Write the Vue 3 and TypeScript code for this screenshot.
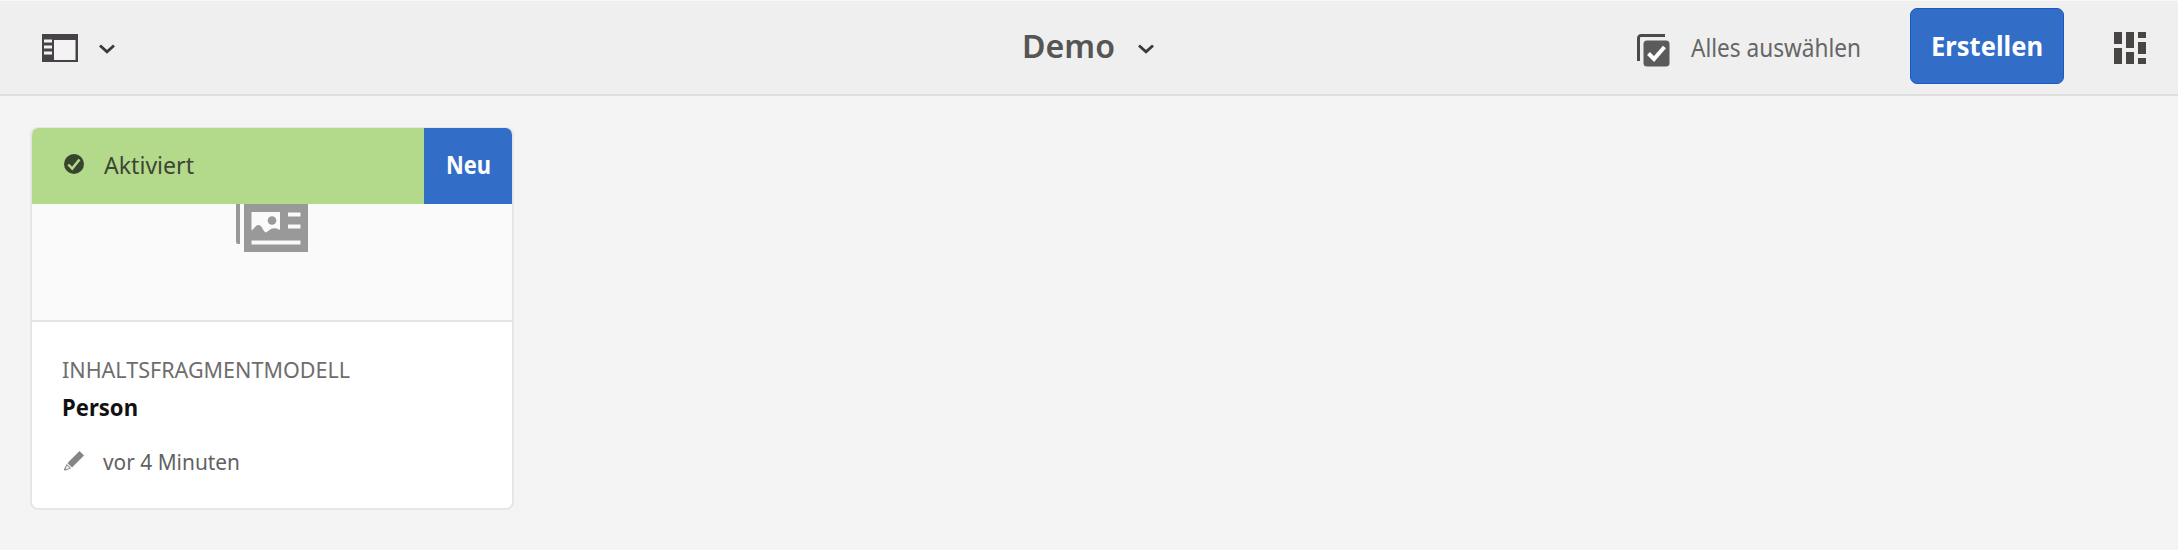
<script setup lang="ts">
interface Label {
  text: string
  width: number
  height: number
  baseline: number
}

const labels: Record<string, Label> = {
  title: { text: 'Demo', width: 93, height: 40, baseline: 33 },
  selectAll: { text: 'Alles auswählen', width: 170, height: 32, baseline: 24.7 },
  create: { text: 'Erstellen', width: 112, height: 32, baseline: 25.5 },
  status: { text: 'Aktiviert', width: 90, height: 32, baseline: 24 },
  badge: { text: 'Neu', width: 45, height: 32, baseline: 24 },
  type: { text: 'INHALTSFRAGMENTMODELL', width: 288, height: 32, baseline: 24 },
  name: { text: 'Person', width: 76, height: 32, baseline: 24 },
  modified: { text: 'vor 4 Minuten', width: 137, height: 32, baseline: 25 },
}

const columns = [
  [[0, 12], [16, 16]],
  [[0, 16], [20, 12]],
  [[0, 6], [10, 12], [26, 6]],
]
</script>

<template>
  <div class="page">
    <header class="bar">
      <div class="rail">
        <svg width="36" height="28" viewBox="0 0 36 28">
          <rect width="36" height="28" fill="#464248" />
          <path fill="#f3f3f3" d="M12 6h21.500v20H12zM2 5.600h8v2.800H2zM2 11.600h8v2.800H2zM2 17.600h8v2.800H2z" />
        </svg>
        <svg class="chevron" width="18" height="12" viewBox="0 0 18 12">
          <path d="M2 2.500l7 6.300 7-6.300" />
        </svg>
      </div>
      <div class="heading">
        <svg class="label title" :width="labels.title.width" :height="labels.title.height">
          <text x="0" :y="labels.title.baseline" :textLength="labels.title.width" lengthAdjust="spacingAndGlyphs">{{ labels.title.text }}</text>
        </svg>
        <svg class="chevron" width="18" height="12" viewBox="0 0 18 12">
          <path d="M2 2.500l7 6.300 7-6.300" />
        </svg>
      </div>
      <div class="actions">
        <svg class="select-icon" width="33" height="33" viewBox="0 0 33 33">
          <path d="M1.500 27V4a2.500 2.500 0 0 1 2.500-2.500H28" fill="none" stroke="#4b4b4b" stroke-width="3" />
          <rect x="6.500" y="6.500" width="26" height="26" rx="3.500" fill="#5b5b5b" />
          <path d="M11.500 19.500l5.500 5.500 10.500-12" fill="none" stroke="#fff" stroke-width="4" />
        </svg>
        <svg class="label select" :width="labels.selectAll.width" :height="labels.selectAll.height">
          <text x="0" :y="labels.selectAll.baseline" :textLength="labels.selectAll.width" lengthAdjust="spacingAndGlyphs">{{ labels.selectAll.text }}</text>
        </svg>
        <button class="create">
          <svg class="label" :width="labels.create.width" :height="labels.create.height">
            <text x="0" :y="labels.create.baseline" :textLength="labels.create.width" lengthAdjust="spacingAndGlyphs">{{ labels.create.text }}</text>
          </svg>
        </button>
        <svg width="32" height="32" viewBox="0 0 32 32" fill="#494545">
          <template v-for="(column, i) in columns" :key="i">
            <rect v-for="cell in column" :key="cell[0]" :x="i * 12" :y="cell[0]" width="8" :height="cell[1]" />
          </template>
        </svg>
      </div>
    </header>

    <main class="content">
      <article class="card">
        <div class="banner">
          <div class="status">
            <svg width="20" height="20" viewBox="0 0 20 20">
              <circle cx="10" cy="10" r="10" fill="#37452e" />
              <path d="M4.300 10.500l3.900 4L15.500 5.500" fill="none" stroke="#b3da8a" stroke-width="2.500" />
            </svg>
            <svg class="label" :width="labels.status.width" :height="labels.status.height">
              <text x="0" :y="labels.status.baseline" :textLength="labels.status.width" lengthAdjust="spacingAndGlyphs">{{ labels.status.text }}</text>
            </svg>
          </div>
          <div class="badge">
            <svg class="label" :width="labels.badge.width" :height="labels.badge.height">
              <text x="0" :y="labels.badge.baseline" :textLength="labels.badge.width" lengthAdjust="spacingAndGlyphs">{{ labels.badge.text }}</text>
            </svg>
          </div>
        </div>
        <div class="preview">
          <svg width="72" height="48" viewBox="0 0 72 48">
            <path fill="#999" d="M0 0h4v40H2a2 2 0 0 1-2-2zM8 0h64v48H8z" />
            <path fill="#fafafa" d="M15.500 8H44v18c-3-2-7-2.500-9-1l-5 3.500c-3-1-4-7.500-7.500-7.500-3 0-4 4-7 5.500zM52 8.500h12.500v4H52zM52 20.500h12.500v4H52zM15.500 36.500h49v4h-49z" />
            <circle cx="36" cy="16.500" r="4.300" fill="#999" />
          </svg>
        </div>
        <div class="details">
          <svg class="label type" :width="labels.type.width" :height="labels.type.height">
            <text x="0" :y="labels.type.baseline" :textLength="labels.type.width" lengthAdjust="spacingAndGlyphs">{{ labels.type.text }}</text>
          </svg>
          <svg class="label name" :width="labels.name.width" :height="labels.name.height">
            <text x="0" :y="labels.name.baseline" :textLength="labels.name.width" lengthAdjust="spacingAndGlyphs">{{ labels.name.text }}</text>
          </svg>
          <div class="modified">
            <svg width="20" height="20" viewBox="0 0 20 20">
              <path fill="#858585" d="M15.500 0L20 4.500 8 16.500 3.500 12z" />
              <path fill="#999" d="M2.700 12.800l4.500 4.500L2 19.500H0V18z" />
              <path fill="#fff" d="M3 14.800l2.200 2.200-2.500 1-.7-.7z" />
            </svg>
            <svg class="label" :width="labels.modified.width" :height="labels.modified.height">
              <text x="0" :y="labels.modified.baseline" :textLength="labels.modified.width" lengthAdjust="spacingAndGlyphs">{{ labels.modified.text }}</text>
            </svg>
          </div>
        </div>
      </article>
    </main>
  </div>
</template>

<style>
body {
  margin: 0;
  background: #f4f4f4;
}
</style>

<style scoped>
.page {
  height: 550px;
  background: #f4f4f4;
  font-family: 'Noto Sans', 'Open Sans', sans-serif;
  overflow: hidden;
}
svg {
  display: block;
  flex: none;
}
.bar {
  box-sizing: border-box;
  height: 96px;
  display: grid;
  grid-template-columns: 1fr auto 1fr;
  background: #efefef;
  border-top: 1px solid #f8f8f8;
  border-bottom: 2px solid #dedede;
}
.rail {
  display: flex;
  align-items: flex-start;
  gap: 20px;
  padding: 33px 0 0 42px;
}
.chevron {
  margin-top: 9px;
}
.chevron path {
  fill: none;
  stroke: #3a3a3a;
  stroke-width: 2.8;
}
.heading {
  display: flex;
  align-items: flex-start;
  gap: 22px;
  padding: 33px 2px 0 0;
}
.title {
  margin-top: -9px;
  font-size: 32.5px;
  font-weight: 600;
  fill: #555;
}
.label {
  overflow: visible;
}
.actions {
  display: flex;
  align-items: center;
  justify-content: flex-end;
  padding-right: 32px;
}
.select-icon {
  margin: 5px 21px 0 0;
}
.select {
  margin: 1px 49px 0 0;
  font-size: 24.5px;
  fill: #666;
}
.create {
  width: 154px;
  height: 76px;
  margin: 0 50px 3px 0;
  padding: 0;
  display: flex;
  align-items: center;
  justify-content: center;
  border: 1px solid #185abf;
  border-radius: 7px;
  background: #326ec8;
  font: 700 26.5px 'Noto Sans', 'Open Sans', sans-serif;
  fill: #fff;
}
.content {
  padding: 31px 30px;
}
.card {
  box-sizing: border-box;
  width: 484px;
  height: 383px;
  border: 2px solid #e5e5e5;
  border-top-width: 1px;
  border-radius: 8px;
  overflow: hidden;
  background: #fff;
}
.banner {
  display: flex;
  height: 76px;
}
.status {
  flex: 1;
  display: flex;
  align-items: center;
  gap: 20px;
  padding-left: 32px;
  background: #b3da8a;
  font-size: 24px;
  fill: #3d4637;
}
.status svg:first-child {
  margin-bottom: 4px;
}
.badge {
  width: 88px;
  display: flex;
  align-items: center;
  justify-content: center;
  background: #326ec8;
  font-size: 24.5px;
  font-weight: 700;
  fill: #fff;
}
.preview {
  height: 116px;
  display: flex;
  justify-content: center;
  background: #fafafa;
  border-bottom: 2px solid #e3e3e3;
}
.details {
  padding: 32px 30px;
}
.type {
  font-size: 22.5px;
  fill: #6d6d6d;
}
.name {
  margin-top: 6px;
  font-size: 24px;
  font-weight: 700;
  fill: #111;
}
.modified {
  display: flex;
  align-items: center;
  gap: 19px;
  margin-top: 21px;
  padding-left: 2px;
  font-size: 22.5px;
  fill: #626262;
}
</style>
